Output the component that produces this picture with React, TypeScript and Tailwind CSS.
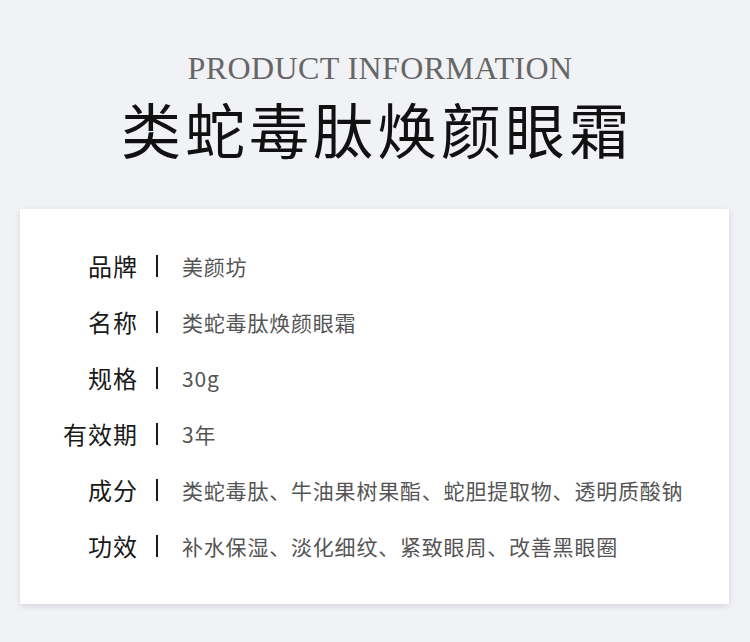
import React from "react";

const rows: { label: string; value: string }[] = [
  { label: "品牌", value: "美颜坊" },
  { label: "名称", value: "类蛇毒肽焕颜眼霜" },
  { label: "规格", value: "30g" },
  { label: "有效期", value: "3年" },
  { label: "成分", value: "类蛇毒肽、牛油果树果酯、蛇胆提取物、透明质酸钠" },
  { label: "功效", value: "补水保湿、淡化细纹、紧致眼周、改善黑眼圈" },
];

const cjk = { fontFamily: '"Noto Sans CJK SC", "Noto Sans", sans-serif' };

const App: React.FC = () => {
  return (
    <div className="w-[750px] h-[642px] bg-[#f1f2f6] overflow-hidden" style={cjk}>
      {/* heading */}
      <header className="pt-[52px] text-center">
        <p
          className="pl-[10px] text-[32px] leading-[32px] text-[#666] tracking-[0.4px]"
          style={{ fontFamily: '"Liberation Serif", serif' }}
        >
          PRODUCT INFORMATION
        </p>
        <h1 className="mt-[14px] text-[60px] leading-[60px] tracking-[4px] text-[#111] pl-[4px]">
          类蛇毒肽焕颜眼霜
        </h1>
      </header>

      {/* info card */}
      <main className="mx-[20px] mt-[51px] w-[709px] bg-white pt-[29px] pb-[30px] shadow-[0_2px_6px_rgba(0,0,0,0.12)]">
        {rows.map((row) => (
          <div key={row.label} className="flex items-center h-[56px]">
            <span className="w-[118px] text-right text-[24px] leading-none text-[#1a1a1a] tracking-[1px]">
              {row.label}
            </span>
            <span className="ml-[18px] w-[2px] h-[22px] bg-[#1a1a1a]" />
            <span className="ml-[24px] text-[21px] leading-none text-[#555] tracking-[0.8px]">
              {row.value}
            </span>
          </div>
        ))}
      </main>
    </div>
  );
};

export default App;
